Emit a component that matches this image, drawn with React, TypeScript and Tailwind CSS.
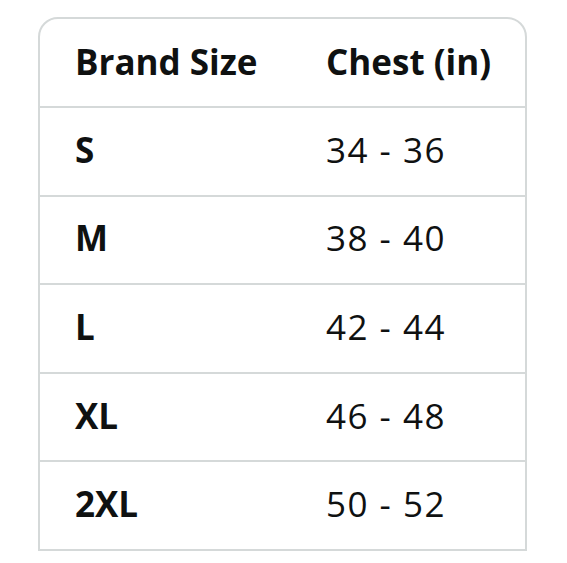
import React from 'react';

const rows = [
  { size: 'S', chest: '34 - 36' },
  { size: 'M', chest: '38 - 40' },
  { size: 'L', chest: '42 - 44' },
  { size: 'XL', chest: '46 - 48' },
  { size: '2XL', chest: '50 - 52' },
];

export default function App() {
  return (
    <div className="w-[567px] h-[563px] bg-white pt-[17px] pl-[38px]" style={{ fontFamily: '"Open Sans", "Noto Sans", sans-serif' }}>
      <div className="w-[489px] border-2 border-[#d5d9d9] rounded-t-[20px] text-[#0f1111] text-[35px] leading-[48px]">
        <div className="grid grid-cols-[251px_1fr] h-[87px] items-center font-bold pb-[2px]">
          <div className="pl-[35px]">Brand Size</div>
          <div className="pl-[35px]">Chest (in)</div>
        </div>
        {rows.map((row) => (
          <div key={row.size} className="grid grid-cols-[251px_1fr] h-[88.6px] items-center border-t-2 border-[#d5d9d9] pb-[3px]">
            <div className="pl-[35px] font-bold">{row.size}</div>
            <div className="pl-[35px] tracking-[1.5px]">{row.chest}</div>
          </div>
        ))}
      </div>
    </div>
  );
}
